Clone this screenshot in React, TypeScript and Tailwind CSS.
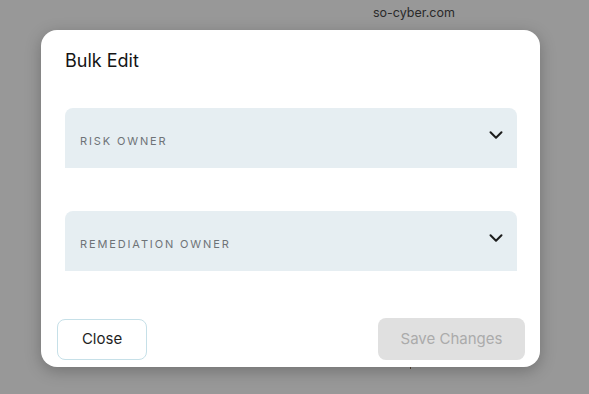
import * as React from "react";
import { ChevronDown } from "lucide-react";

const font = { fontFamily: "Inter, 'Noto Sans', sans-serif" };

const SelectField = ({ label }: { label: string }) => (
  <div className="flex h-[60px] items-start justify-between rounded-t-[8px] bg-[#e6eef2] pl-[15px] pr-[10px]">
    <span className="mt-[26px] text-[11px] leading-[14px] tracking-[0.17em] text-[#6e7377]">{label}</span>
    <ChevronDown className="mt-[16px] text-[#1c1c1c]" size={22} strokeWidth={2.2} />
  </div>
);

export default function App() {
  return (
    <div className="relative h-[394px] w-[589px] overflow-hidden bg-[#989898]" style={font}>
      {/* page behind the overlay */}
      <div className="absolute left-[373px] top-[4px] text-[12.5px] leading-[18px] text-[#2a2a2a]">so-cyber.com</div>
      <div className="absolute left-[410px] top-[362px] h-[7px] w-[1px] bg-[#5a4a3a]" />

      <div className="relative pl-[41px] pt-[30px]">
        <div className="flex h-[337px] w-[499px] flex-col rounded-[16px] bg-white shadow-[0_4px_16px_rgba(0,0,0,0.25)]">
          <h2 className="pl-[24px] pt-[17px] text-[18px] leading-[27px] font-normal text-[#141414]">Bulk Edit</h2>

          <div className="mt-[34px] flex flex-col gap-[43px] pl-[24px] pr-[23px]">
            <SelectField label="RISK OWNER" />
            <SelectField label="REMEDIATION OWNER" />
          </div>

          <div className="mt-auto flex items-center justify-between pb-[7px] pl-[16px] pr-[15px]">
            <button className="h-[41px] w-[90px] rounded-[8px] border border-[#c6e0e8] bg-white text-[15px] text-[#1f1f1f]">
              Close
            </button>
            <button disabled className="h-[42px] w-[147px] rounded-[8px] bg-[#e0e0e0] text-[15px] text-[#ababab]">
              Save Changes
            </button>
          </div>
        </div>
      </div>
    </div>
  );
}
